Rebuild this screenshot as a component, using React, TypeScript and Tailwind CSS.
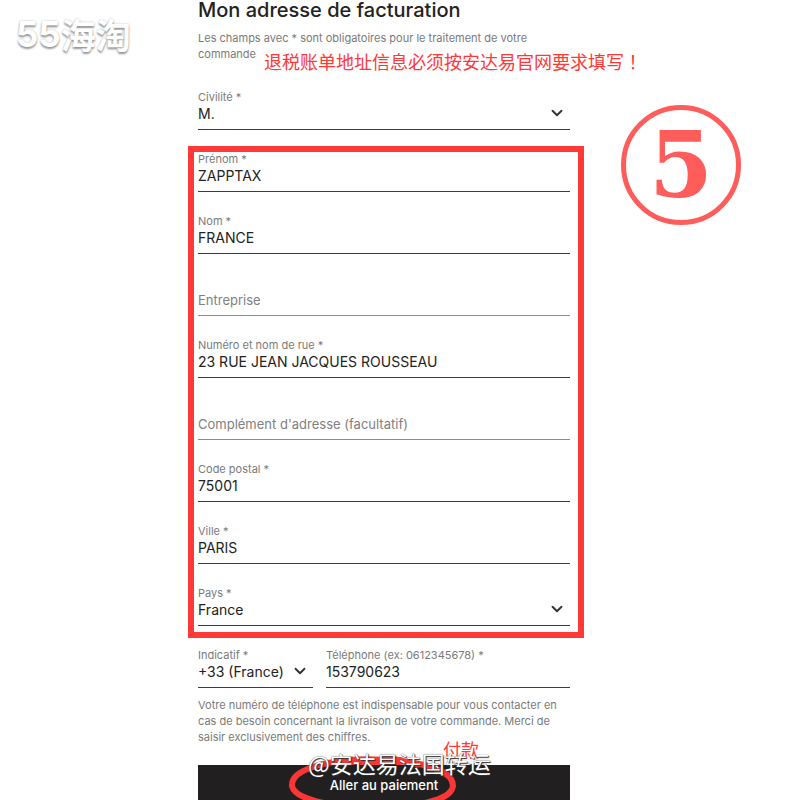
import { ChevronDown } from 'lucide-react';

type FieldProps = {
  id: string;
  label: string;
  value?: string;
  type?: string;
};

const billingFields: FieldProps[] = [
  { id: 'prenom', label: 'Prénom *', value: 'ZAPPTAX' },
  { id: 'nom', label: 'Nom *', value: 'FRANCE' },
  { id: 'entreprise', label: 'Entreprise' },
  { id: 'rue', label: 'Numéro et nom de rue *', value: '23 RUE JEAN JACQUES ROUSSEAU' },
  { id: 'complement', label: "Complément d'adresse (facultatif)" },
  { id: 'postal', label: 'Code postal *', value: '75001' },
  { id: 'ville', label: 'Ville *', value: 'PARIS' },
];

function TextField({ id, label, value, type = 'text' }: FieldProps) {
  // Without a value the label moves down into the input, as a placeholder
  if (!value) {
    return (
      <div className="relative pt-3.5">
        <label htmlFor={id} className="sr-only">
          {label}
        </label>
        <input
          id={id}
          type={type}
          placeholder={label}
          className="block h-[26px] w-full border-b border-[#8c8c8c] pb-[5px] text-[13px] leading-5 outline-none placeholder:text-[#808080]"
        />
      </div>
    );
  }

  return (
    <div>
      <label htmlFor={id} className="block h-3.5 text-[11px] leading-3.5 text-[#7a7a7a]">
        {label}
      </label>
      <input
        id={id}
        type={type}
        defaultValue={value}
        className="block h-[26px] w-full border-b border-[#3c3c3c] pb-1.5 text-sm leading-5 outline-none"
      />
    </div>
  );
}

function SelectField({ id, label, value }: FieldProps) {
  return (
    <div>
      <label htmlFor={id} className="block h-3.5 text-[11px] leading-3.5 text-[#7a7a7a]">
        {label}
      </label>
      <div className="relative">
        <select
          id={id}
          defaultValue={value}
          className="block h-[26px] w-full appearance-none border-b border-[#3c3c3c] pb-[5px] text-sm leading-5 outline-none"
        >
          <option>{value}</option>
        </select>
        <ChevronDown
          strokeWidth={2.5}
          className="pointer-events-none absolute right-1 top-0 h-4.5 w-4.5 text-[#333]"
        />
      </div>
    </div>
  );
}

function PaymentCircle() {
  return (
    <svg
      viewBox="0 0 170 54"
      className="pointer-events-none absolute -top-2.5 left-[90px] h-[54px] w-[170px]"
      fill="none"
      stroke="#fb3636"
      strokeLinecap="round"
    >
      <path
        d="M40 8C16 13 3 20 4 31C7 44 40 52 84 52C128 52 163 46 165 31C165 17 143 9 110 6C84 3 60 4 40 8"
        strokeWidth="6"
      />
      <path d="M60 6L112 6" strokeWidth="8" />
      <path d="M40 8L64 4M108 4L130 10" strokeWidth="5" />
    </svg>
  );
}

export default function App() {
  return (
    <div className="grid h-screen grid-cols-[198fr_372fr_230fr] overflow-hidden bg-white font-['Inter','Noto_Sans_CJK_SC',sans-serif] text-[#222]">
      <div className="pl-4 pt-4">
        <div className="flex items-center whitespace-nowrap text-[35px] font-bold leading-9 text-white [text-shadow:0_2px_2px_#999,0_0_2px_#bbb]">
          <span>55</span>
          <span className="font-['Noto_Sans_CJK_SC',sans-serif]">海淘</span>
        </div>
      </div>

      <form className="min-w-0">
        <h1 className="h-[30px] whitespace-nowrap text-xl font-medium leading-5">
          Mon adresse de facturation
        </h1>
        <div className="relative">
          <p className="pr-8 text-[11px] leading-4 text-[#7a7a7a]">
            Les champs avec * sont obligatoires pour le traitement de votre commande
          </p>
          <p className="absolute left-[66px] top-5 whitespace-nowrap font-['Noto_Sans_CJK_SC',sans-serif] text-lg leading-[22px] text-[#ff3838]">
            退税账单地址信息必须按安达易官网要求填写
            <span className="font-['Noto_Sans_CJK_TC',sans-serif]" lang="zh-Hant">！</span>
          </p>
        </div>

        <div className="mt-7">
          <SelectField id="civilite" label="Civilité *" value="M." />
        </div>

        {/* Highlighted address block */}
        <div className="-ml-2.5 -mr-3.5 mt-4 flex flex-col gap-[22px] border-6 border-[#ff3838] pb-1.5 pl-1 pr-2">
          {billingFields.map((field) => (
            <TextField key={field.id} {...field} />
          ))}
          <SelectField id="pays" label="Pays *" value="France" />
        </div>

        <div className="mt-2.5 grid grid-cols-[115fr_244fr] gap-[13px]">
          <SelectField id="indicatif" label="Indicatif *" value="+33 (France)" />
          <TextField id="telephone" type="tel" label="Téléphone (ex: 0612345678) *" value="153790623" />
        </div>
        <p className="mt-[9px] text-[11px] leading-4 text-[#7a7a7a]">
          Votre numéro de téléphone est indispensable pour vous contacter en cas de besoin concernant la livraison de
          votre commande. Merci de saisir exclusivement des chiffres.
        </p>

        <div className="relative mt-5">
          <button type="submit" className="block h-[41px] w-full bg-[#211f20] text-[13px] font-medium text-white">
            Aller au paiement
          </button>
          <PaymentCircle />
          <span className="absolute -top-7 left-[245px] font-['Noto_Sans_CJK_SC',sans-serif] text-lg leading-6 text-[#ff3838]">
            付款
          </span>
          <span className="absolute -top-4 left-[110px] whitespace-nowrap font-['Noto_Sans_CJK_SC',sans-serif] text-[23px] leading-7 text-white [text-shadow:0_0_1px_#222,1px_1px_1px_#333]">
            @安达易法国转运
          </span>
        </div>
      </form>

      <div className="flex items-start justify-center pt-[105px]">
        <div className="mr-2 flex size-[120px] items-center justify-center rounded-full border-5 border-[#ff5c5c] font-['DejaVu_Serif',serif] text-[92px] font-bold leading-none text-[#ff5c5c]">
          5
        </div>
      </div>
    </div>
  );
}
